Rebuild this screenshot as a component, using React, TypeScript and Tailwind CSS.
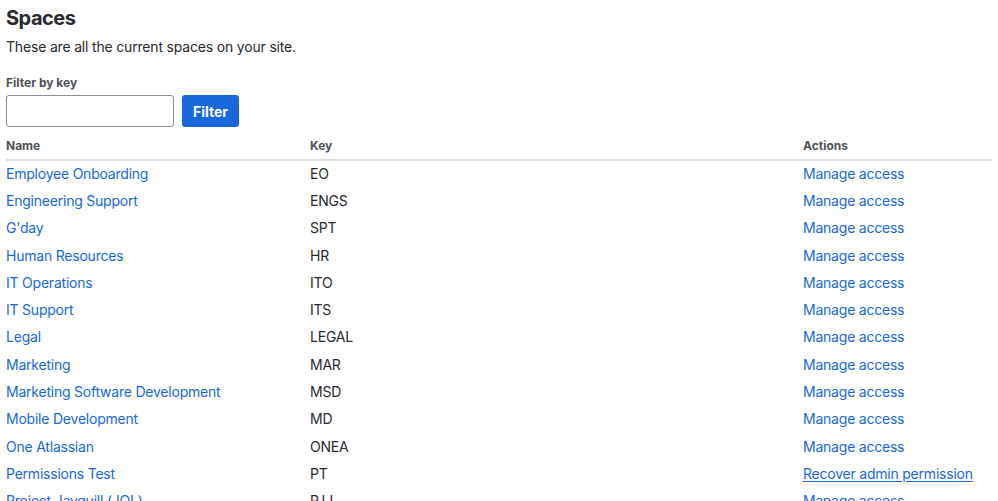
import React from "react";

type Space = { name: string; key: string; action?: "recover" };

const spaces: Space[] = [
  { name: "Employee Onboarding", key: "EO" },
  { name: "Engineering Support", key: "ENGS" },
  { name: "G'day", key: "SPT" },
  { name: "Human Resources", key: "HR" },
  { name: "IT Operations", key: "ITO" },
  { name: "IT Support", key: "ITS" },
  { name: "Legal", key: "LEGAL" },
  { name: "Marketing", key: "MAR" },
  { name: "Marketing Software Development", key: "MSD" },
  { name: "Mobile Development", key: "MD" },
  { name: "One Atlassian", key: "ONEA" },
  { name: "Permissions Test", key: "PT", action: "recover" },
  { name: "Project Jayquill (JQL)", key: "PJJ" },
];

export default function App() {
  return (
    <main className="min-h-screen bg-white px-[6px] pt-[6px] text-[#292a2e] [font-family:Inter,'Noto_Sans',sans-serif]">
      <h1 className="text-[20px] font-bold leading-[24px] tracking-[-0.5px]">Spaces</h1>
      <p className="mt-[7px] text-[14px] leading-[20px] tracking-[-0.18px]">These are all the current spaces on your site.</p>

      <label className="mt-[18px] block text-[12px] font-bold leading-[16px] text-[#505258]">Filter by key</label>
      <div className="mt-[4px] flex gap-2">
        <input className="h-[32px] w-[168px] rounded-[3px] border border-[#8c8f97] px-2 text-[14px] outline-none" />
        <button className="h-[32px] w-[57px] rounded-[3px] bg-[#1868db] text-[14px] font-bold text-white">Filter</button>
      </div>

      <table className="mt-[7px] w-[986px] table-fixed border-collapse text-left">
        <colgroup>
          <col className="w-[304px]" />
          <col className="w-[493px]" />
          <col />
        </colgroup>
        <thead>
          <tr className="border-b-2 border-[#dddee1]">
            <th className="pt-[4px] pb-[5px] text-[12px] font-bold leading-[16px] text-[#505258]">Name</th>
            <th className="pt-[4px] pb-[5px] text-[12px] font-bold leading-[16px] text-[#505258]">Key</th>
            <th className="pt-[4px] pb-[5px] text-[12px] font-bold leading-[16px] text-[#505258]">Actions</th>
          </tr>
        </thead>
        <tbody className="text-[14px] leading-[20px] tracking-[-0.22px]">
          {spaces.map((s) => (
            <tr key={s.key} className="h-[27.3px]">
              <td><a className="text-[#1868db]">{s.name}</a></td>
              <td>{s.key}</td>
              <td>
                {s.action === "recover" ? (
                  <a className="text-[#1868db] underline underline-offset-2">Recover admin permission</a>
                ) : (
                  <a className="text-[#1868db]">Manage access</a>
                )}
              </td>
            </tr>
          ))}
        </tbody>
      </table>
    </main>
  );
}
